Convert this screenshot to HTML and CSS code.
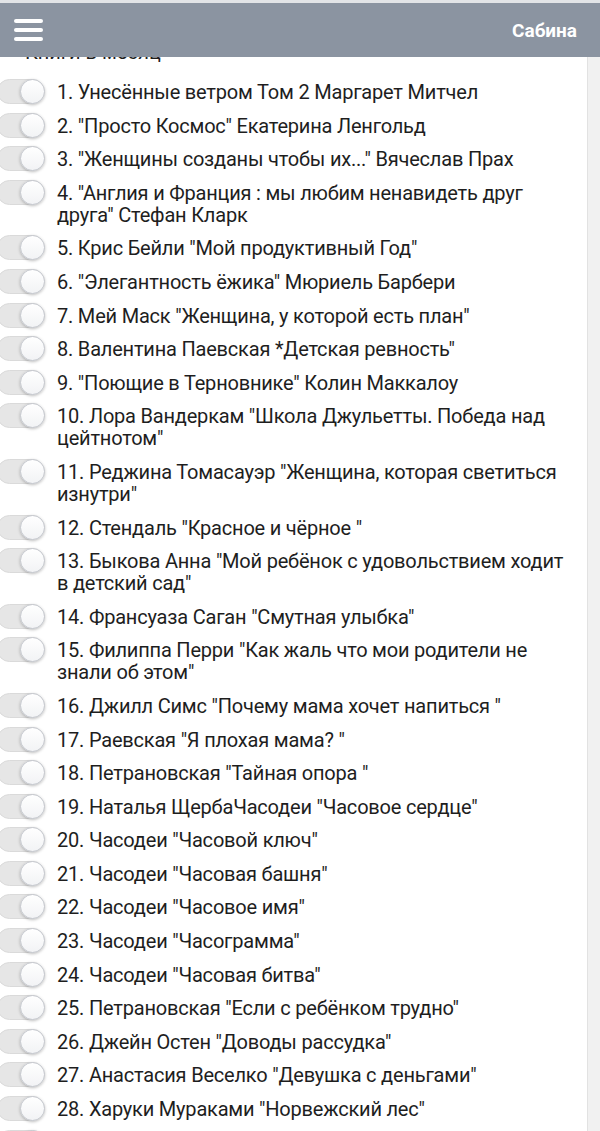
FILE: index.html
```html
<!DOCTYPE html>
<html lang="ru">
<head>
<meta charset="utf-8">
<link rel="stylesheet" href="styles.css">
</head>
<body>
<header class="topbar">
  <div class="burger"><span></span><span></span><span></span></div>
  <div class="user">Сабина</div>
</header>
<div class="page">
  <main class="content">
    <h2 class="title">Книги в месяц</h2>
    <ul class="list">
      <li class="item"><span class="switch"><span class="knob"></span></span><span class="label">1. Унесённые ветром Том 2 Маргарет Митчел</span></li>
      <li class="item"><span class="switch"><span class="knob"></span></span><span class="label">2. "Просто Космос" Екатерина Ленгольд</span></li>
      <li class="item"><span class="switch"><span class="knob"></span></span><span class="label">3. "Женщины созданы чтобы их..." Вячеслав Прах</span></li>
      <li class="item"><span class="switch"><span class="knob"></span></span><span class="label">4. "Англия и Франция : мы любим ненавидеть друг друга" Стефан Кларк</span></li>
      <li class="item"><span class="switch"><span class="knob"></span></span><span class="label">5. Крис Бейли "Мой продуктивный Год"</span></li>
      <li class="item"><span class="switch"><span class="knob"></span></span><span class="label">6. "Элегантность ёжика" Мюриель Барбери</span></li>
      <li class="item"><span class="switch"><span class="knob"></span></span><span class="label">7. Мей Маск "Женщина, у которой есть план"</span></li>
      <li class="item"><span class="switch"><span class="knob"></span></span><span class="label">8. Валентина Паевская *Детская ревность"</span></li>
      <li class="item"><span class="switch"><span class="knob"></span></span><span class="label">9. "Поющие в Терновнике" Колин Маккалоу</span></li>
      <li class="item"><span class="switch"><span class="knob"></span></span><span class="label">10. Лора Вандеркам "Школа Джульетты. Победа над цейтнотом"</span></li>
      <li class="item"><span class="switch"><span class="knob"></span></span><span class="label">11. Реджина Томасауэр "Женщина, которая светиться изнутри"</span></li>
      <li class="item"><span class="switch"><span class="knob"></span></span><span class="label">12. Стендаль "Красное и чёрное "</span></li>
      <li class="item"><span class="switch"><span class="knob"></span></span><span class="label">13. Быкова Анна "Мой ребёнок с удовольствием ходит в детский сад"</span></li>
      <li class="item"><span class="switch"><span class="knob"></span></span><span class="label">14. Франсуаза Саган "Смутная улыбка"</span></li>
      <li class="item"><span class="switch"><span class="knob"></span></span><span class="label">15. Филиппа Перри "Как жаль что мои родители не знали об этом"</span></li>
      <li class="item"><span class="switch"><span class="knob"></span></span><span class="label">16. Джилл Симс "Почему мама хочет напиться "</span></li>
      <li class="item"><span class="switch"><span class="knob"></span></span><span class="label">17. Раевская "Я плохая мама? "</span></li>
      <li class="item"><span class="switch"><span class="knob"></span></span><span class="label">18. Петрановская "Тайная опора "</span></li>
      <li class="item"><span class="switch"><span class="knob"></span></span><span class="label">19. Наталья ЩербаЧасодеи "Часовое сердце"</span></li>
      <li class="item"><span class="switch"><span class="knob"></span></span><span class="label">20. Часодеи "Часовой ключ"</span></li>
      <li class="item"><span class="switch"><span class="knob"></span></span><span class="label">21. Часодеи "Часовая башня"</span></li>
      <li class="item"><span class="switch"><span class="knob"></span></span><span class="label">22. Часодеи "Часовое имя"</span></li>
      <li class="item"><span class="switch"><span class="knob"></span></span><span class="label">23. Часодеи "Часограмма"</span></li>
      <li class="item"><span class="switch"><span class="knob"></span></span><span class="label">24. Часодеи "Часовая битва"</span></li>
      <li class="item"><span class="switch"><span class="knob"></span></span><span class="label">25. Петрановская "Если с ребёнком трудно"</span></li>
      <li class="item"><span class="switch"><span class="knob"></span></span><span class="label">26. Джейн Остен "Доводы рассудка"</span></li>
      <li class="item"><span class="switch"><span class="knob"></span></span><span class="label">27. Анастасия Веселко "Девушка с деньгами"</span></li>
      <li class="item"><span class="switch"><span class="knob"></span></span><span class="label">28. Харуки Мураками "Норвежский лес"</span></li>
      <li class="item"><span class="switch"><span class="knob"></span></span><span class="label"></span></li>
    </ul>
  </main>
  <div class="track"></div>
</div>
</body>
</html>
```
FILE: styles.css
```css
html, body {
  margin: 0;
  padding: 0;
  height: 100%;
  overflow: hidden;
  background: #fff;
}
body {
  font-family: Roboto, "Noto Sans", sans-serif;
  color: #1e1e1e;
}
.topbar {
  position: fixed;
  top: 0;
  left: 0;
  right: 0;
  height: 54px;
  border-top: 3px solid #e2e4e7;
  background: #8b94a1;
  display: flex;
  align-items: center;
  justify-content: space-between;
  padding: 0 23px 0 14px;
  z-index: 10;
}
.burger {
  display: flex;
  flex-direction: column;
  gap: 5px;
  width: 29px;
}
.burger span {
  display: block;
  height: 4px;
  border-radius: 2px;
  background: #fff;
}
.user {
  color: #fff;
  font-weight: bold;
  font-size: 19px;
}
.page {
  display: flex;
  height: 100%;
  padding-top: 57px;
  box-sizing: border-box;
}
.content {
  flex: 1;
  min-width: 0;
  padding-right: 8px;
}
.track {
  width: 12px;
  flex: none;
  background: #f1f1f1;
  border-left: 1px solid #e2e2e2;
}
.title {
  margin: -16px 0 0 25px;
  font-size: 20px;
  font-weight: normal;
  line-height: 22px;
}
.list {
  list-style: none;
  margin: 13px 0 0;
  padding: 0;
}
.item {
  display: flex;
  align-items: flex-start;
  padding: 5px 0 6.6px;
  min-height: 22px;
}
.switch {
  flex: none;
  position: relative;
  width: 48px;
  height: 25px;
  margin: -2px 12px -3px -3px;
  border-radius: 13px;
  background: #e6e6e6;
  border: 1px solid #dadada;
  box-sizing: border-box;
}
.knob {
  position: absolute;
  right: -1px;
  top: -1px;
  width: 25px;
  height: 25px;
  border-radius: 50%;
  box-sizing: border-box;
  background: linear-gradient(#ffffff, #f2f3f5);
  border: 1px solid #c6c9cf;
  box-shadow: 0 1px 3px rgba(0,0,0,0.25);
}
.label {
  flex: 1;
  min-width: 0;
  font-size: 20px;
  line-height: 22px;
  letter-spacing: -0.2px;
}
```
